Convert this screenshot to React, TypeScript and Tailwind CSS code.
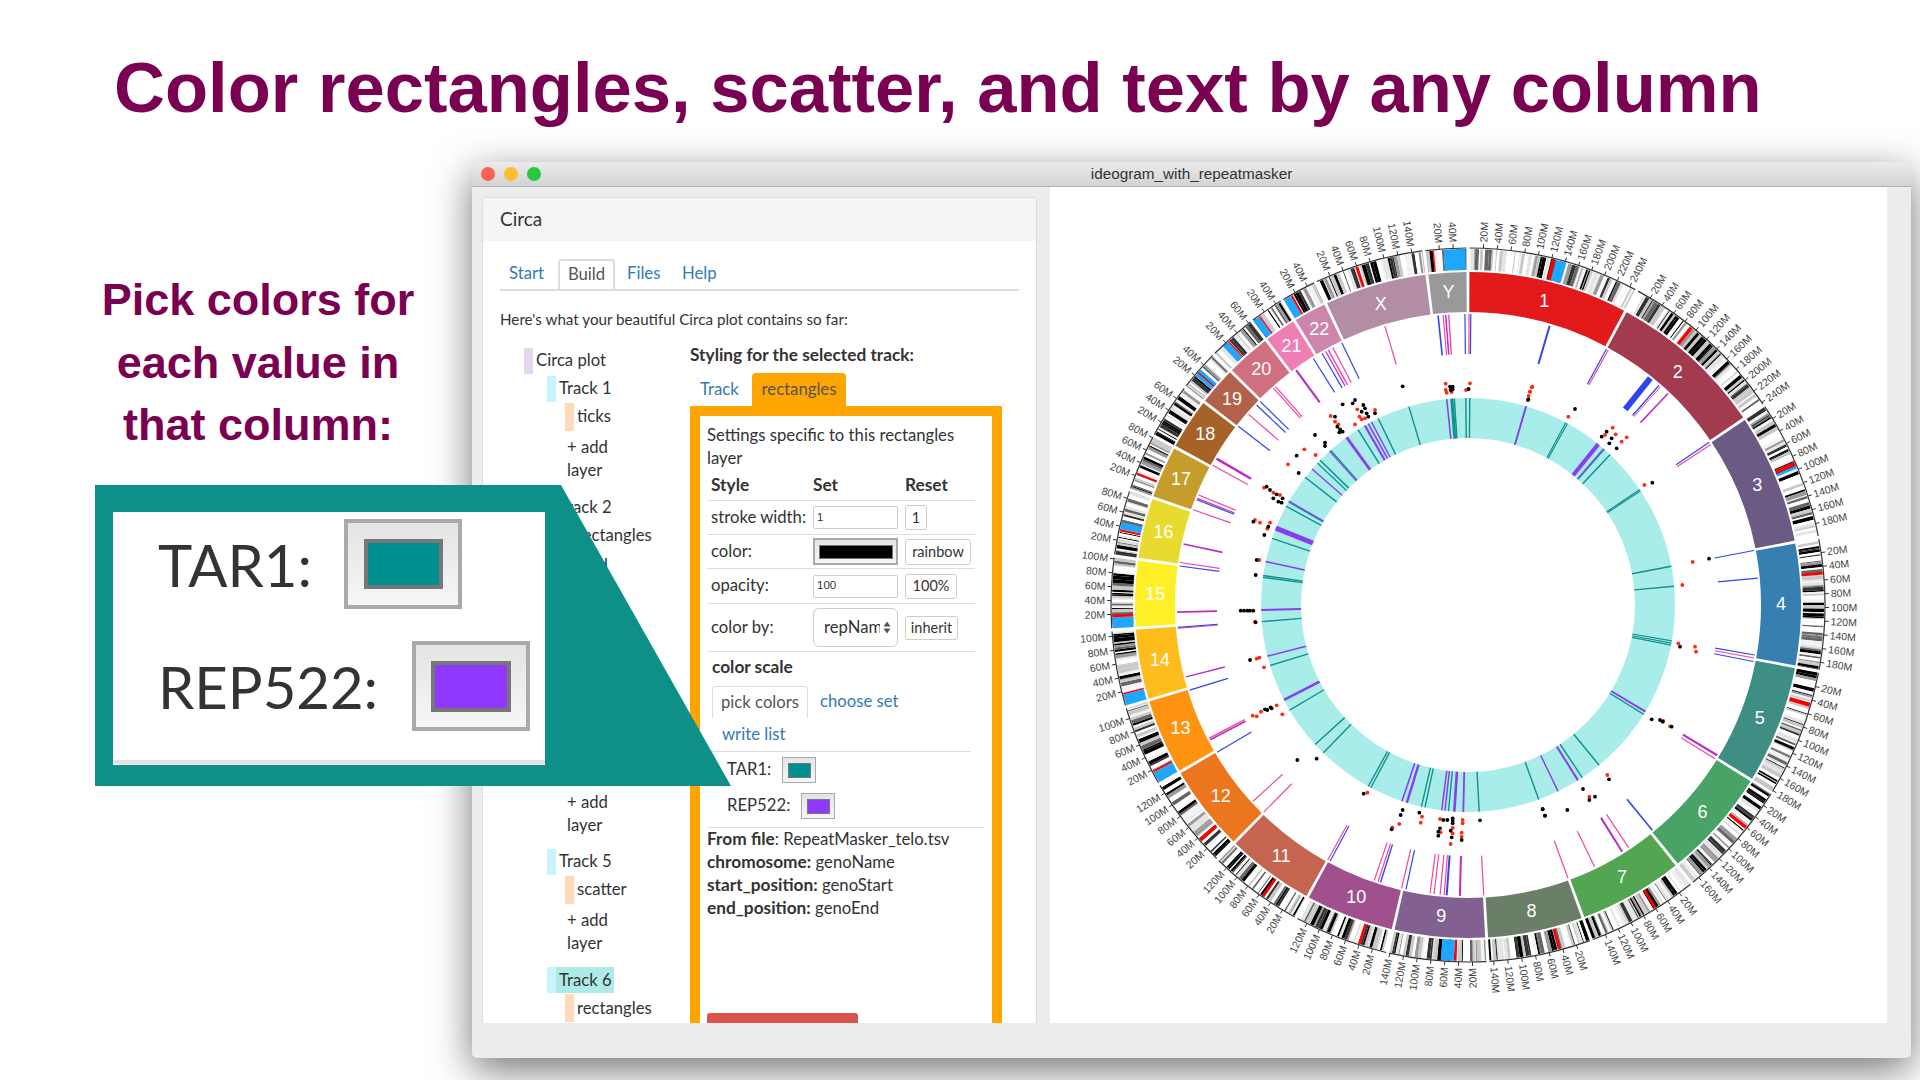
import type { ReactNode } from "react";

const CX = 418;
const CY = 418;

// name, size in Mb, colour, end angle (degrees clockwise from top), special bands
type Chrom = { name: string; size: number; color: string; end: number; bands: [number, number, string][] };
const RED = "#ff0000";
const BLU = "#1ea7fd";

const chroms: Chrom[] = [
  { name: "1", size: 249, color: "#e31a1c", end: 28.2, bands: [[120, 126, RED], [126, 142, BLU]] },
  { name: "2", size: 243, color: "#a33b50", end: 56, bands: [[90, 95, RED]] },
  { name: "3", size: 198, color: "#6a5a84", end: 79.1, bands: [[88, 94, RED], [94, 98, BLU]] },
  { name: "4", size: 191, color: "#377eb1", end: 100.7, bands: [[48, 52, RED]] },
  { name: "5", size: 181, color: "#3e8e84", end: 121.7, bands: [[44, 50, RED]] },
  { name: "6", size: 171, color: "#49a266", end: 141.2, bands: [[58, 63, RED]] },
  { name: "7", size: 159, color: "#54a552", end: 159.8, bands: [[58, 62, RED]] },
  { name: "8", size: 146, color: "#6b7f68", end: 176.8, bands: [[43, 47, RED]] },
  { name: "9", size: 141, color: "#826192", end: 193, bands: [[43, 47, RED], [47, 66, BLU]] },
  { name: "10", size: 135, color: "#a0508c", end: 208.8, bands: [[38, 42, RED]] },
  { name: "11", size: 135, color: "#c6654f", end: 224.5, bands: [[52, 56, RED]] },
  { name: "12", size: 133, color: "#ec761e", end: 239.9, bands: [[33, 38, RED]] },
  { name: "13", size: 115, color: "#ff9410", end: 253.4, bands: [[0, 16, BLU], [16, 19, RED]] },
  { name: "14", size: 107, color: "#ffbd1c", end: 266, bands: [[0, 16, BLU], [16, 18, RED]] },
  { name: "15", size: 102, color: "#ffef27", end: 277.9, bands: [[0, 16, BLU], [16, 20, RED]] },
  { name: "16", size: 90, color: "#e9da30", end: 288.8, bands: [[33, 36, RED], [36, 46, BLU]] },
  { name: "17", size: 81, color: "#c69c2a", end: 298.3, bands: [[22, 25, RED]] },
  { name: "18", size: 78, color: "#a66227", end: 307.6, bands: [] },
  { name: "19", size: 59, color: "#b2614b", end: 314.6, bands: [[20, 25, BLU], [25, 27, RED], [27, 32, BLU]] },
  { name: "20", size: 63, color: "#d06f7f", end: 322.7, bands: [[14, 23, BLU], [23, 25, RED]] },
  { name: "21", size: 48, color: "#ee7fb5", end: 328.6, bands: [[0, 10, BLU], [10, 12, RED]] },
  { name: "22", size: 51, color: "#ce85ac", end: 334.7, bands: [[0, 12, BLU], [12, 15, RED]] },
  { name: "X", size: 155, color: "#b38da4", end: 352.9, bands: [[58, 62, RED]] },
  { name: "Y", size: 59, color: "#999999", end: 360, bands: [[10, 12, RED], [26, 58, BLU]] },
];

const P = "#f0479f";
const B = "#2f45f0";
const M = "#b92fc4";
const T = "#14908e";
const V = "#8a3dee";

// outer track of repeats: angle, colour, width
const spokes: [number, string, number][] = [
  [-5.9, B, 1.6], [-4.9, P, 1.2], [-4.4, M, 1.5], [-3.8, P, 1.4], [-0.6, B, 1.2], [0.2, P, 1.2], [0.55, B, 1.2],
  [16.3, B, 2], [28.4, B, 1.2], [28.8, P, 1.2], [38.8, B, 6], [41, B, 1.5], [41.4, P, 1], [43.4, M, 1.5],
  [56, B, 1.2], [56.5, P, 1.2], [79.2, B, 1.2], [84.7, B, 1.2], [99.9, B, 1.2], [100.5, P, 1.2], [101.2, B, 1.2],
  [121.1, M, 2.2], [121.9, P, 1.2], [140.7, B, 1.6], [146.5, P, 1.2], [148, M, 2], [154.2, P, 1.2], [159.9, P, 1.2],
  [176.9, P, 1.2], [-178.4, M, 2], [-175.8, B, 2], [-175.3, P, 1.2], [-174.5, P, 1.2], [-173.3, P, 1.2], [-172.5, P, 1.2],
  [-167.7, B, 1.2], [-166.8, P, 1.2], [-162.5, B, 1.4], [-162, P, 1.2], [-161.2, P, 1.2], [-151.7, B, 1.2], [-151.2, P, 1.2],
  [-135.4, P, 1.2], [-132.4, P, 1.2], [-120.4, B, 1.2], [-117.6, M, 1.6], [-117.2, P, 1.4], [-107, B, 1.2], [-104.3, M, 1.5],
  [-94.6, P, 1], [-94.4, B, 1.2], [-91.4, M, 1.8], [-82.3, B, 1.2], [-81.6, P, 1.2], [-77.9, M, 1.6], [-70.9, P, 1.2],
  [-68.8, B, 1.2], [-68.5, M, 1.2], [-67.8, P, 1.2], [-61.3, P, 1.2], [-59.8, M, 2.5], [-52.1, B, 1.2], [-49, P, 1.2],
  [-46.6, B, 1.2], [-45.6, B, 1.2], [-41.9, P, 1.2], [-41.4, P, 1.2], [-36.2, M, 2.2], [-32.1, B, 1.2], [-30.1, B, 1.2],
  [-29.3, M, 1.2], [-28.7, P, 1.5], [-27.7, P, 1.2], [-25.7, B, 1.2], [-16.6, P, 1.2],
];

// inner track, same repeats coloured by name
const marks: [number, string, number][] = [
  [-5.9, V, 1.5], [-4.5, T, 3], [-3.8, T, 1.5], [-0.6, T, 1.4], [0.5, T, 1.4], [16.3, V, 1.6], [-16.6, T, 1.4],
  [-25.7, T, 1.5], [-27.8, V, 1.4], [-28.8, V, 1.6], [-29.9, V, 2.2], [-32.1, T, 1.5], [-35.9, V, 2.8], [-41.6, T, 1.4],
  [-42, V, 1.2], [-45.6, T, 1.5], [-46.7, T, 1.2], [-48.9, V, 1.4], [-51.9, T, 1.5], [-59.9, V, 1.5], [-60.2, T, 1],
  [-61.5, T, 1.4], [-68.2, V, 5], [-71.2, T, 1.4], [-77.9, V, 1.6], [-81.8, T, 1.4], [-82.3, T, 1.4], [-91.4, V, 2],
  [-94.6, T, 1.4], [-104.3, V, 1.6], [-107, T, 1.4], [-117.3, V, 2.6], [-120.5, T, 1.4], [-132.4, T, 1.4], [-135.6, T, 1.4],
  [-151.2, T, 1.4], [-152, T, 1.4], [-161.4, V, 1.6], [-162.8, V, 2.4], [-167, T, 1.4], [-168, T, 1.4], [-172.7, V, 1.5],
  [-173.6, V, 1.5], [-174.6, T, 1.4], [-176.2, V, 2.6], [-178.7, V, 1.8], [176.9, T, 1.4], [160, T, 1.4], [154.2, V, 1.4],
  [147.9, V, 2], [146.5, T, 1.4], [140.7, T, 1.5], [121, V, 2], [121.9, T, 1.4], [100, T, 1.2], [100.6, T, 1.2], [101.2, T, 1.2],
  [84.8, T, 1.4], [79.2, T, 1.4], [56.1, T, 1.2], [56.5, T, 1.2], [43.4, T, 1.5], [41.2, T, 1.2], [40.9, V, 1.2], [39, V, 4],
  [28.2, T, 1.2], [28.7, T, 1.2], [16.3, V, 1.4],
];

// scatter points grouped by crop, in 3x coordinates with an origin
type DotGroup = { ox: number; oy: number; black: number[][]; red: number[][] };
const dotGroups: DotGroup[] = [
  {
    ox: 10,
    oy: 3,
    black: [
      [1028, 589], [1170, 590], [1178, 590], [1172, 600], [1178, 598], [1226, 597], [1404, 630], [885, 630], [878, 640], [848, 643],
      [910, 645], [915, 655], [905, 665], [920, 670], [925, 680], [945, 670], [825, 680], [832, 710], [840, 718], [848, 725], [838, 727],
      [765, 735], [795, 758], [795, 768], [710, 797], [716, 849], [620, 890], [630, 900], [650, 913], [668, 925], [640, 925], [655, 935],
      [665, 938], [580, 995], [625, 1010], [613, 1035], [590, 1110], [587, 1155],
    ],
    red: [
      [1157, 581], [1157, 600], [1160, 608], [1175, 606], [1218, 600], [1230, 580], [1415, 592], [1410, 605], [1406, 618], [892, 658],
      [898, 680], [905, 688], [915, 685], [945, 660], [885, 703], [812, 678], [825, 695], [835, 703], [733, 778], [767, 795], [684, 823],
      [612, 893], [640, 908], [660, 915], [585, 990], [600, 998], [630, 998], [622, 1016], [598, 1110],
    ],
  },
  {
    ox: 10,
    oy: 413,
    black: [
      [542, 32], [552, 32], [562, 32], [570, 32], [580, 32], [587, 67], [570, 180], [615, 328], [622, 330], [632, 322], [635, 325],
      [712, 480], [770, 476], [911, 581], [1028, 630], [1022, 645], [995, 688], [1078, 638], [1150, 660], [1162, 660], [1178, 655],
      [1178, 662], [1178, 670], [1260, 661], [1140, 685], [1135, 695], [1135, 707], [1172, 692], [1175, 712], [1205, 720], [1448, 627], [1455, 647],
    ],
    red: [
      [585, 65], [590, 176], [598, 173], [612, 202], [578, 347], [590, 349], [603, 335], [650, 316], [667, 343], [922, 578], [1018, 672],
      [997, 682], [1086, 650], [1082, 668], [1140, 657], [1208, 660], [1208, 670], [1142, 697], [1178, 684], [1178, 700], [1172, 732],
      [1205, 698], [1205, 710],
    ],
  },
  {
    ox: 450,
    oy: 413,
    black: [[540, 140], [455, 358], [480, 360], [488, 365], [515, 380], [327, 538], [249, 567], [285, 590], [268, 600], [128, 628], [135, 647], [202, 630]],
    red: [[535, 130], [585, 140], [588, 155], [490, 363], [510, 379], [322, 525], [268, 590]],
  },
  {
    ox: 450,
    oy: 3,
    black: [[85, 628], [225, 657], [320, 725], [305, 740], [335, 745], [328, 760], [350, 775], [457, 878], [627, 1106]],
    red: [[97, 590], [90, 605], [205, 680], [315, 735], [338, 713], [347, 733], [380, 742], [365, 755], [433, 885], [578, 1116], [547, 1185]],
  },
];

function polar(r: number, a: number): [number, number] {
  const rad = (a * Math.PI) / 180;
  return [CX + r * Math.sin(rad), CY - r * Math.cos(rad)];
}

function sector(r0: number, r1: number, a0: number, a1: number) {
  const [x0, y0] = polar(r1, a0);
  const [x1, y1] = polar(r1, a1);
  const [x2, y2] = polar(r0, a1);
  const [x3, y3] = polar(r0, a0);
  return `M${x0} ${y0}A${r1} ${r1} 0 0 1 ${x1} ${y1}L${x2} ${y2}A${r0} ${r0} 0 0 0 ${x3} ${y3}Z`;
}

function arc(r: number, a0: number, a1: number) {
  const [x0, y0] = polar(r, a0);
  const [x1, y1] = polar(r, a1);
  return `M${x0} ${y0}A${r} ${r} 0 0 1 ${x1} ${y1}`;
}

// small seeded generator so the stripes stay the same between runs
function seeded(seed: number) {
  let s = seed;
  return () => {
    s = (s * 1664525 + 1013904223) % 4294967296;
    return s / 4294967296;
  };
}

const grays = ["#ffffff", "#e4e4e4", "#c8c8c8", "#ffffff", "#9a9a9a", "#f2f2f2", "#666666", "#c8c8c8", "#333333", "#000000", "#ffffff", "#000000"];

function Cytobands({ chrom, start, end, index }: { chrom: Chrom; start: number; end: number; index: number }) {
  const rand = seeded(index * 977 + 13);
  const deg = (end - start) / chrom.size;
  const out: ReactNode[] = [];
  let pos = 0;
  while (pos < chrom.size) {
    const len = 1.2 + rand() * 4.6;
    const color = grays[Math.floor(rand() * grays.length)];
    const stop = Math.min(pos + len, chrom.size);
    out.push(<path key={pos} d={sector(335, 356, start + pos * deg, start + stop * deg)} fill={color} />);
    pos = stop;
  }
  chrom.bands.forEach(([a, b, c]) => {
    out.push(<path key={`s${a}`} d={sector(335, 356, start + a * deg, start + b * deg)} fill={c} />);
  });
  return <>{out}</>;
}

function CircosPlot() {
  return (
    <svg width={836} height={836} viewBox="0 0 836 836" className="block">
      <circle cx={CX} cy={CY} r={187} fill="none" stroke="#a9edea" strokeWidth={40} />
      {marks.map(([a, c, w], i) => {
        const [x0, y0] = polar(167, a);
        const [x1, y1] = polar(207, a);
        return <line key={i} x1={x0} y1={y0} x2={x1} y2={y1} stroke={c} strokeWidth={w} />;
      })}
      {spokes.map(([a, c, w], i) => {
        const [x0, y0] = polar(251, a);
        const [x1, y1] = polar(291, a);
        return <line key={i} x1={x0} y1={y0} x2={x1} y2={y1} stroke={c} strokeWidth={w} />;
      })}
      {dotGroups.map((g, gi) => (
        <g key={gi}>
          {g.red.map(([x, y], i) => (
            <circle key={i} cx={g.ox + x / 3} cy={g.oy + y / 3} r={1.9} fill="#ff2a10" />
          ))}
          {g.black.map(([x, y], i) => (
            <circle key={i} cx={g.ox + x / 3} cy={g.oy + y / 3} r={1.9} fill="#000" />
          ))}
        </g>
      ))}
      {chroms.map((c, i) => {
        const prev = i === 0 ? 0 : chroms[i - 1].end;
        const start = prev + 0.25;
        const end = c.end - 0.25;
        const mid = (start + end) / 2;
        const [lx, ly] = polar(313, mid);
        const deg = (end - start) / c.size;
        const flip = mid > 180;
        const ticks: number[] = [];
        for (let mb = 20; mb <= c.size; mb += 20) ticks.push(mb);
        return (
          <g key={c.name}>
            <path d={sector(293, 333, start, end)} fill={c.color} />
            <text x={lx} y={ly} dy=".3em" textAnchor="middle" fontSize={18} fill="#fff" fontFamily="'Liberation Sans', sans-serif">
              {c.name}
            </text>
            <Cytobands chrom={c} start={start} end={end} index={i} />
            <path d={arc(357, start, end)} fill="none" stroke="#333" strokeWidth={1.2} />
            {ticks.map((mb) => {
              const a = start + mb * deg;
              const [tx0, ty0] = polar(357, a);
              const [tx1, ty1] = polar(361, a);
              const [x, y] = polar(363, a);
              return (
                <g key={mb}>
                  <line x1={tx0} y1={ty0} x2={tx1} y2={ty1} stroke="#333" strokeWidth={1} />
                  <text
                    x={x}
                    y={y}
                    dy=".35em"
                    fontSize={10.5}
                    fill="#444"
                    fontFamily="'Liberation Sans', sans-serif"
                    textAnchor={flip ? "end" : "start"}
                    transform={`rotate(${flip ? a + 90 : a - 90} ${x} ${y})`}
                  >
                    {mb}M
                  </text>
                </g>
              );
            })}
          </g>
        );
      })}
    </svg>
  );
}

function TreeBar({ className }: { className: string }) {
  return <span className={`h-full w-[9px] shrink-0 ${className}`} />;
}

function TrackGroup({ name, layer, active }: { name: string; layer: string; active?: boolean }) {
  return (
    <div className="mb-[12.25px]">
      <div className="ml-[64px] flex h-[26px] items-center">
        <TreeBar className="bg-[#c9f3ff]" />
        <span className={`flex h-full items-center pl-[3px] pr-[2px] ${active ? "bg-[#aeebe8]" : ""}`}>{name}</span>
      </div>
      <div className="ml-[82px] mt-px flex h-[28px] items-center">
        <TreeBar className="bg-[#ffd9b8]" />
        <span className="pl-[3px]">{layer}</span>
      </div>
      <div className="ml-[84px] mt-[5px] w-[60px] leading-[23px]">+ add layer</div>
    </div>
  );
}

function Tree() {
  return (
    <div className="w-[207px] shrink-0 pt-[5px]">
      <div className="ml-[41px] flex h-[26px] items-center">
        <TreeBar className="bg-[#e6d5ee]" />
        <span className="pl-[3px]">Circa plot</span>
      </div>
      <div className="mt-[2px]">
        <TrackGroup name="Track 1" layer="ticks" />
        <TrackGroup name="Track 2" layer="rectangles" />
        <TrackGroup name="Track 3" layer="rectangles" />
        <TrackGroup name="Track 4" layer="text" />
        <TrackGroup name="Track 5" layer="scatter" />
        <TrackGroup name="Track 6" layer="rectangles" active />
      </div>
    </div>
  );
}

function SmallButton({ children, className = "" }: { children: ReactNode; className?: string }) {
  return (
    <span className={`flex items-center justify-center rounded-[3px] border border-[#ccc] bg-white text-[14.5px] ${className}`}>{children}</span>
  );
}

function Swatch({ color, className, inner }: { color: string; className: string; inner: string }) {
  return (
    <span className={`flex shrink-0 items-center justify-center border-[#aaa] bg-gradient-to-b from-[#e4e4e4] to-[#f6f6f6] ${className}`}>
      <span className={`block border-[#777] ${inner}`} style={{ backgroundColor: color }} />
    </span>
  );
}

function StyleRow({ label, height, children, reset }: { label: string; height: string; children: ReactNode; reset: ReactNode }) {
  return (
    <div className={`flex w-[268px] items-center border-b border-[#ddd] ${height}`}>
      <span className="w-[106px] shrink-0 pl-[4px]">{label}</span>
      <span className="w-[92px] shrink-0">{children}</span>
      {reset}
    </div>
  );
}

function StylePanel() {
  return (
    <div className="w-[312px]">
      <div className="whitespace-nowrap text-[17.3px] font-bold leading-[23px]">Styling for the selected track:</div>
      <div className="mt-[7px] flex h-[33px] items-stretch">
        <span className="flex w-[62px] items-center pl-[10px] text-[#337ab7]">Track</span>
        <span className="flex w-[94px] items-center justify-center rounded-t-[4px] bg-[#ffa500] text-[#555]">rectangles</span>
      </div>
      <div className="h-[700px] border-[10px] border-[#ffa500] bg-white pl-[7px] pt-[8px]">
        <div className="w-[255px] leading-[23px]">Settings specific to this rectangles layer</div>
        <div className="flex h-[31px] w-[268px] items-center border-b border-[#ddd] text-[17.3px] font-bold">
          <span className="w-[106px] pl-[4px]">Style</span>
          <span className="w-[92px]">Set</span>
          <span>Reset</span>
        </div>
        <StyleRow
          label="stroke width:"
          height="h-[34px]"
          reset={<SmallButton className="h-[25px] w-[22px]">1</SmallButton>}
        >
          <span className="flex h-[23px] w-[85px] items-center rounded-[2px] border border-[#ccc] pl-[3px] font-['Liberation_Sans',sans-serif] text-[11.5px]">1</span>
        </StyleRow>
        <StyleRow label="color:" height="h-[34px]" reset={<SmallButton className="h-[26px] w-[66px]">rainbow</SmallButton>}>
          <Swatch color="#000" className="h-[27px] w-[85px] border-2" inner="h-[14px] w-[74px] border" />
        </StyleRow>
        <StyleRow label="opacity:" height="h-[35px]" reset={<SmallButton className="h-[25px] w-[52px]">100%</SmallButton>}>
          <span className="flex h-[23px] w-[85px] items-center rounded-[2px] border border-[#ccc] pl-[3px] font-['Liberation_Sans',sans-serif] text-[11.5px]">100</span>
        </StyleRow>
        <StyleRow label="color by:" height="h-[48px]" reset={<SmallButton className="h-[24px] w-[53px]">inherit</SmallButton>}>
          <span className="flex h-[39px] w-[85px] items-center rounded-[6px] border border-[#ccc] pl-[10px]">
            <span className="w-[56px] overflow-hidden whitespace-nowrap">repName</span>
            <svg width="8" height="13" viewBox="0 0 8 13" className="ml-[3px]">
              <path d="M4 0.5 7.5 5.5H.5ZM4 12.5.5 7.5h7Z" fill="#555" />
            </svg>
          </span>
        </StyleRow>
        <div className="mt-[3px] pl-[5px] text-[17.3px] font-bold leading-[23px]">color scale</div>
        <div className="mt-[8px] flex h-[32px] items-stretch pl-[5px]">
          <span className="flex w-[96px] items-center justify-center rounded-t-[4px] border border-b-0 border-[#ddd] text-[#555]">pick colors</span>
          <span className="flex items-center pl-[12px] text-[#337ab7]">choose set</span>
        </div>
        <div className="w-[264px] border-b border-[#ddd] pb-[5px] pl-[15px] pt-[5px] leading-[23px] text-[#337ab7]">write list</div>
        <div className="mt-[5px] flex h-[26px] items-center pl-[20px]">
          <span className="w-[55px]">TAR1:</span>
          <Swatch color="#008f8f" className="h-[26px] w-[34px] border" inner="h-[15px] w-[23px] border" />
        </div>
        <div className="mt-[10px] flex h-[26px] items-center pl-[20px]">
          <span className="w-[74px]">REP522:</span>
          <Swatch color="#9038ff" className="h-[26px] w-[34px] border" inner="h-[15px] w-[23px] border" />
        </div>
        <div className="mt-[8px] w-[277px] border-t border-[#ddd]" />
        <div className="leading-[23px]">
          <div><b className="text-[17.3px] leading-none">From file</b>: RepeatMasker_telo.tsv</div>
          <div><b className="text-[17.3px] leading-none">chromosome:</b> genoName</div>
          <div><b className="text-[17.3px] leading-none">start_position:</b> genoStart</div>
          <div><b className="text-[17.3px] leading-none">end_position:</b> genoEnd</div>
        </div>
        <div className="mt-[93px] flex h-[32px] w-[151px] items-center justify-center whitespace-nowrap rounded-[3px] bg-[#d9534f] text-[15px] text-white">Delete rectangles plot</div>
      </div>
    </div>
  );
}

function Sidebar() {
  return (
    <div className="h-[826px] w-[555px] shrink-0 overflow-hidden rounded-t-[4px] border-x border-t border-[#ddd] bg-white font-['Lato',sans-serif] text-[16.7px] text-[#333]">
      <div className="flex h-[43px] items-center bg-[#f5f5f5] pl-[17px] text-[19px]">Circa</div>
      <div className="px-[17px] pt-[17px]">
        <div className="flex h-[33px] w-[519px] items-stretch border-b-2 border-[#ddd] pt-px text-[#337ab7]">
          <span className="flex w-[58px] items-center pl-[9px]">Start</span>
          <span className="flex w-[57px] items-center justify-center rounded-t-[4px] border-2 border-b-0 border-[#ddd] bg-white text-[#555]">Build</span>
          <span className="flex w-[67px] items-center pl-[12px]">Files</span>
          <span className="flex items-center">Help</span>
        </div>
        <p className="mt-[17px] text-[15.2px] leading-[23px]">Here's what your beautiful Circa plot contains so far:</p>
      </div>
      <div className="mt-[12px] flex">
        <Tree />
        <StylePanel />
      </div>
    </div>
  );
}

function TitleBar() {
  return (
    <div className="relative flex h-[25px] items-center justify-center rounded-t-[5px] border-b border-[#b1b1b1] bg-gradient-to-b from-[#ebebeb] to-[#d3d3d3]">
      <div className="absolute left-[9px] flex gap-[9px]">
        <span className="h-[14px] w-[14px] rounded-full bg-[#ff5f57]" />
        <span className="h-[14px] w-[14px] rounded-full bg-[#ffbd2e]" />
        <span className="h-[14px] w-[14px] rounded-full bg-[#28c940]" />
      </div>
      <span className="text-[15.3px] text-[#333]">ideogram_with_repeatmasker</span>
    </div>
  );
}

function Callout() {
  return (
    <div className="absolute left-[95px] top-[485px] h-[301px] w-[636px] bg-[#0e9088] [clip-path:polygon(0_0,466px_0,636px_301px,0_301px)]">
      <div className="ml-[18px] mt-[27px] flex h-[253px] w-[432px] flex-col bg-white font-['Lato',sans-serif] text-[58px] text-[#333]">
        <div className="mt-[7px] flex h-[90px] items-center pl-[45px]">
          <span className="w-[186px]">TAR1:</span>
          <Swatch color="#008f8f" className="h-[90px] w-[118px] border-[4px]" inner="h-[50px] w-[79px] border-[4px]" />
        </div>
        <div className="mt-[32px] flex h-[90px] items-center pl-[45px]">
          <span className="w-[254px]">REP522:</span>
          <Swatch color="#9038ff" className="h-[90px] w-[118px] border-[4px]" inner="h-[51px] w-[80px] border-[4px]" />
        </div>
        <div className="mt-auto mb-px h-[4px] bg-[#e4e4e4]" />
      </div>
    </div>
  );
}

export default function App() {
  return (
    <div className="relative h-[1080px] w-[1920px] overflow-hidden bg-white font-['Liberation_Sans',sans-serif]">
      <h1 className="h-[162px] whitespace-nowrap pl-[114px] pt-[48px] text-[70.6px] font-bold leading-[80px] text-[#7a0052]">
        Color rectangles, scatter, and text by any column
      </h1>
      <div className="flex">
        <div className="w-[472px] pl-[44px] pt-[107px] text-center text-[45px] font-bold leading-[62.5px] text-[#7a0052]">
          Pick colors for
          <br />
          each value in
          <br />
          that column:
        </div>
        <div className="h-[896px] w-[1439px] rounded-[5px] bg-[#ececec] shadow-[0_12px_40px_rgba(0,0,0,0.55)]">
          <TitleBar />
          <div className="flex h-[836px] pl-[10px]">
            <div className="pt-[10px]">
              <Sidebar />
            </div>
            <div className="ml-[13px] h-[836px] w-[837px] bg-white">
              <CircosPlot />
            </div>
          </div>
        </div>
      </div>
      <Callout />
    </div>
  );
}
